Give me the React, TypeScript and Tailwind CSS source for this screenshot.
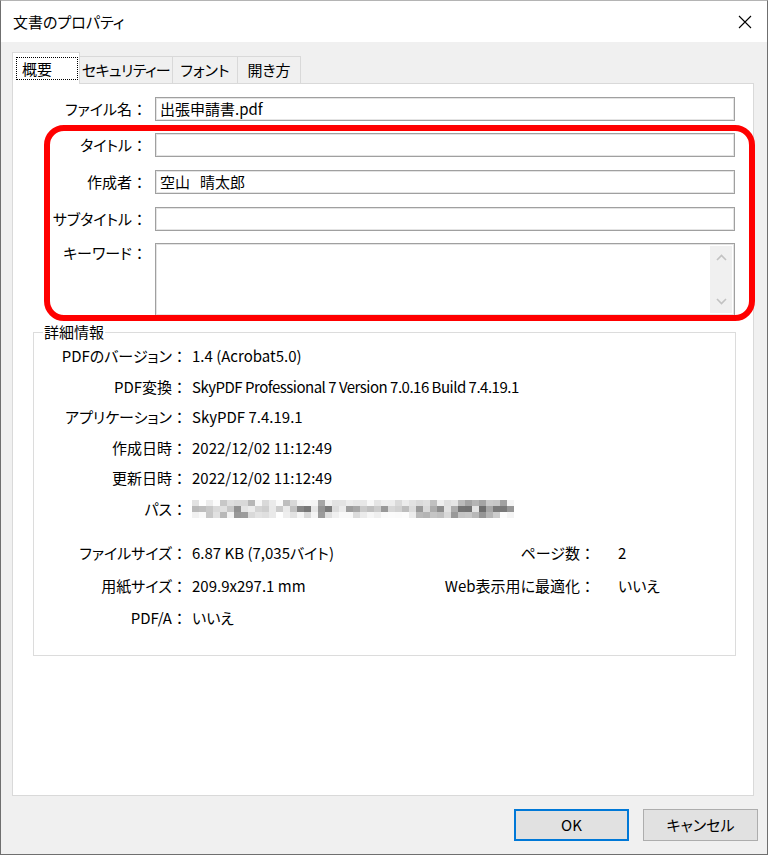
import React from "react";

const FONT = { fontFamily: '"Noto Sans CJK JP", "Noto Sans", sans-serif' };

// pixelated (blurred) path value
function BlurredPath() {
  const cols = 46;
  const rows = 3;
  let seed = 7;
  const rnd = () => {
    seed = (seed * 1103515245 + 12345) % 2147483648;
    return seed / 2147483648;
  };
  const cells: { x: number; y: number; c: string }[] = [];
  for (let r = 0; r < rows; r++) {
    for (let c = 0; c < cols; c++) {
      const v = rnd();
      const dense = c > 32 ? 0.35 : 0;
      let g: number;
      if (r === 1) g = v < 0.3 + dense ? 110 + Math.floor(rnd() * 70) : 185 + Math.floor(rnd() * 55);
      else g = v < 0.12 + dense / 2 ? 150 + Math.floor(rnd() * 50) : 215 + Math.floor(rnd() * 40);
      if (r !== 1 && c > 36 && c < 44 && rnd() < 0.6) g = 150 + Math.floor(rnd() * 60);
      cells.push({ x: c * 7, y: r * 6, c: `rgb(${g},${g},${g})` });
    }
  }
  return (
    <svg width={322} height={18} className="block">
      {cells.map((p, i) => (
        <rect key={i} x={p.x} y={p.y} width={7} height={6} fill={p.c} />
      ))}
    </svg>
  );
}

function Colon() {
  return <span className="inline-block w-[15px] text-center">：</span>;
}

function FormLabel({ text }: { text: string }) {
  return (
    <div className="w-[134px] text-right leading-[20px] [font-feature-settings:'palt']">
      {text}
      <Colon />
    </div>
  );
}

const inputCls =
  "h-[24px] w-[580px] ml-[8px] border border-[#a0a0a0] shadow-[inset_0_0_0_1px_#e4e4e4] bg-white flex items-center pl-[4px] leading-[20px]";

const tabCls =
  "h-[27px] border border-b-0 border-l-0 border-[#d9d9d9] flex items-center justify-center whitespace-nowrap [font-feature-settings:'palt']";

function DetailRow({ label, children }: { label: string; children?: React.ReactNode }) {
  return (
    <div className="flex items-center h-[30.5px]">
      <div className="w-[153px] text-right [font-feature-settings:'palt']">
        {label}
        <Colon />
      </div>
      <div className="ml-[5px]">{children}</div>
    </div>
  );
}

export default function App() {
  return (
    <div
      className="relative w-[768px] h-[855px] flex flex-col bg-[#f0f0f0] border border-[#6f6f6f] border-t-[#b4b4b4] text-[15px] text-black leading-[20px]"
      style={FONT}
    >
      {/* title bar */}
      <div className="h-[41px] bg-white flex items-center justify-between pl-[12px] pr-[15px]">
        <span className="[font-feature-settings:'palt'] pt-[1px]">文書のプロパティ</span>
        <svg width="14" height="14" viewBox="0 0 14 14" className="mt-[1px]">
          <path d="M1 1 L13 13 M13 1 L1 13" stroke="#000" strokeWidth="1.1" />
        </svg>
      </div>

      {/* body */}
      <div className="pl-[11px] pt-[10px]">
        <div className="flex items-end h-[31px]">
          <div className="relative z-10 -mb-px h-[32px] w-[68px] bg-white border border-b-0 border-[#d9d9d9] pt-[4px] pl-[3px]">
            <div className="w-[62px] h-[23px] border border-dotted border-black pl-[5px] flex items-center">
              概要
            </div>
          </div>
          <div className={`${tabCls} w-[93px] tracking-[-0.6px]`}>セキュリティー</div>
          <div className={`${tabCls} w-[65px]`}>フォント</div>
          <div className={`${tabCls} w-[63px]`}>開き方</div>
        </div>

        <div className="w-[742px] h-[713px] bg-white border border-[#d9d9d9] pt-[13px]">
          <div className="flex items-center">
            <FormLabel text="ファイル名" />
            <div className={inputCls}>出張申請書.pdf</div>
          </div>
          <div className="flex items-center mt-[12px]">
            <FormLabel text="タイトル" />
            <div className={inputCls}></div>
          </div>
          <div className="flex items-center mt-[13px]">
            <FormLabel text="作成者" />
            <div className={inputCls}>
              空山<span className="inline-block w-[10px]" />晴太郎
            </div>
          </div>
          <div className="flex items-center mt-[13px]">
            <FormLabel text="サブタイトル" />
            <div className={inputCls}></div>
          </div>
          <div className="flex items-start mt-[12px]">
            <FormLabel text="キーワード" />
            <div className="h-[73px] w-[580px] ml-[8px] border border-[#a0a0a0] shadow-[inset_0_0_0_1px_#e4e4e4] bg-white flex justify-end p-[2px]">
              <div className="w-[22px] h-full bg-[#f0f0f0] flex flex-col items-center justify-between py-[8px]">
                <svg width="11" height="7" viewBox="0 0 11 7">
                  <path d="M1 6 L5.5 1.5 L10 6" fill="none" stroke="#c2c2c2" strokeWidth="1.6" />
                </svg>
                <svg width="11" height="7" viewBox="0 0 11 7">
                  <path d="M1 1 L5.5 5.5 L10 1" fill="none" stroke="#c2c2c2" strokeWidth="1.6" />
                </svg>
              </div>
            </div>
          </div>

          <fieldset className="ml-[20px] mt-[6px] w-[703px] border border-[#dcdcdc] pb-[20px]">
            <legend className="ml-[9px] px-[1px] leading-[20px]">詳細情報</legend>
            <div className="-mt-px">
              <DetailRow label="PDFのバージョン">1.4 (Acrobat5.0)</DetailRow>
              <DetailRow label="PDF変換">
                <span className="tracking-[-0.5px]">SkyPDF Professional 7 Version 7.0.16 Build 7.4.19.1</span>
              </DetailRow>
              <DetailRow label="アプリケーション">SkyPDF 7.4.19.1</DetailRow>
              <DetailRow label="作成日時">2022/12/02 11:12:49</DetailRow>
              <DetailRow label="更新日時">2022/12/02 11:12:49</DetailRow>
              <DetailRow label="パス">
                <BlurredPath />
              </DetailRow>
            </div>
            <div className="mt-[13px]">
              <div className="flex items-center h-[32.5px]">
                <div className="w-[153px] text-right [font-feature-settings:'palt']">
                  ファイルサイズ
                  <Colon />
                </div>
                <div className="ml-[5px] w-[213px] [font-feature-settings:'palt']">6.87 KB (7,035バイト)</div>
                <div className="w-[190px] text-right [font-feature-settings:'palt']">
                  ページ数
                  <Colon />
                </div>
                <div className="ml-[23px]">2</div>
              </div>
              <div className="flex items-center h-[32.5px]">
                <div className="w-[153px] text-right [font-feature-settings:'palt']">
                  用紙サイズ
                  <Colon />
                </div>
                <div className="ml-[5px] w-[213px]">209.9x297.1 mm</div>
                <div className="w-[190px] text-right [font-feature-settings:'palt']">
                  Web表示用に最適化
                  <Colon />
                </div>
                <div className="ml-[23px] [font-feature-settings:'palt']">いいえ</div>
              </div>
              <div className="flex items-center h-[32.5px]">
                <div className="w-[153px] text-right">
                  PDF/A
                  <Colon />
                </div>
                <div className="ml-[5px] [font-feature-settings:'palt']">いいえ</div>
              </div>
            </div>
          </fieldset>
        </div>
      </div>

      {/* buttons */}
      <div className="flex justify-end gap-[14px] pr-[9px] mt-[13px]">
        <button className="w-[115px] h-[32px] border-2 border-[#0078d7] bg-[#e1e1e1] flex items-center justify-center">
          OK
        </button>
        <button className="w-[115px] h-[32px] border border-[#adadad] bg-[#e1e1e1] flex items-center justify-center [font-feature-settings:'palt']">
          キャンセル
        </button>
      </div>

      {/* red annotation frame */}
      <div className="absolute left-[43px] top-[124px] w-[711px] h-[196px] border-[6px] border-[#ff0000] rounded-[20px] pointer-events-none" />
    </div>
  );
}
